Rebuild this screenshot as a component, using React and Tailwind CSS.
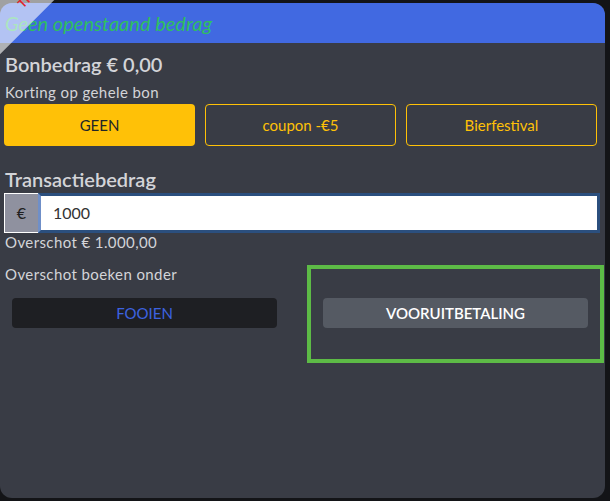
import React from 'react';

const font = { fontFamily: 'Lato, "Open Sans", sans-serif' };

// Corner ribbon over the top-left of the card, text mostly runs off the page
const Ribbon = () => (
    <div className="pointer-events-none absolute left-[-57px] top-[-7px] z-10 flex h-[40px] w-[140px] -rotate-45 items-center bg-white/60 pl-[80px]">
        <span className="text-[12px] font-bold leading-none tracking-wide text-[#e0242a]">TRAINING</span>
    </div>
);

const DiscountButton = ({ label, active }) => (
    <button
        className={`h-[42px] w-[191px] shrink-0 rounded-[4px] text-[15px] ${active ? 'bg-[#ffc107] text-[#212529]' : 'border border-[#ffc107] text-[#ffc107]'}`}
    >
        {label}
    </button>
);

export default function App() {
    return (
        <div className="relative min-h-[501px] w-[610px] overflow-hidden bg-[#131417] pt-[3px]" style={font}>
            <Ribbon />
            <div className="flex h-[495px] w-[605px] flex-col overflow-hidden rounded-[12px] bg-[#393c45]">
                <div className="flex h-[40px] items-center bg-[#4169e1] px-[5px]">
                    <span className="text-[20px] italic text-[#2fbf5f]">Geen openstaand bedrag</span>
                </div>

                <div className="flex flex-col px-[4px]">
                    <div className="mt-[9px] pl-[1px] text-[20px] font-semibold leading-[24px] text-[#d3d4d8]">Bonbedrag € 0,00</div>
                    <div className="mt-[7px] pl-[1px] text-[15px] leading-[18px] tracking-[0.4px] text-[#d3d4d8]">Korting op gehele bon</div>
                    <div className="mt-[3px] flex gap-[10px]">
                        <DiscountButton label="GEEN" active />
                        <DiscountButton label="coupon -€5" />
                        <DiscountButton label="Bierfestival" />
                    </div>

                    <div className="mt-[21px] pl-[1px] text-[20px] font-semibold leading-[24px] text-[#d3d4d8]">Transactiebedrag</div>
                    <div className="mt-[2px] flex h-[40px] w-[596px] shrink-0">
                        <div className="flex w-[34px] items-center justify-center border border-r-0 border-white bg-[#8f919f] text-[16px] text-[#222]">€</div>
                        <div className="flex flex-1 items-center border-[3px] border-[#2b4f7e] border-l-[#6f8fc8] bg-white pl-[12px] text-[16px] text-[#333]">1000</div>
                    </div>
                    <div className="pl-[1px] text-[15px] leading-[18px] tracking-[0.4px] text-[#d3d4d8]">Overschot € 1.000,00</div>

                    <div className="mt-[14px] flex w-[600px] shrink-0">
                        <div className="flex w-[303px] shrink-0 flex-col">
                            <div className="pl-[1px] text-[15px] leading-[18px] tracking-[0.4px] text-[#d3d4d8]">Overschot boeken onder</div>
                            <button className="ml-[8px] mt-[15px] h-[30px] w-[265px] rounded-[4px] bg-[#1e1f23] text-[15px] text-[#3d63e0]">FOOIEN</button>
                        </div>
                        <div className="flex h-[98px] w-[297px] shrink-0 items-start border-[4px] border-[#5dbb46] px-[12px] pt-[29px]">
                            <button className="h-[30px] w-[266px] rounded-[4px] bg-[#555a63] text-[15px] font-semibold text-white">VOORUITBETALING</button>
                        </div>
                    </div>
                </div>
            </div>
        </div>
    );
}
